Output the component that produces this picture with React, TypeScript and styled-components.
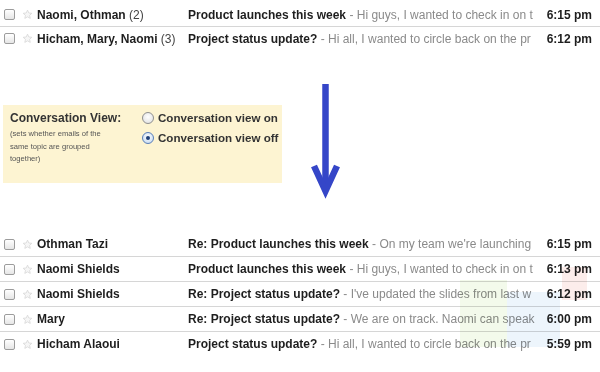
import React from "react";
import styled, { createGlobalStyle } from "styled-components";

const Global = createGlobalStyle`
  html, body { margin: 0; padding: 0; background: #ffffff; }
  body { font-family: "Liberation Sans", Arial, sans-serif; color: #222; }
`;

const Page = styled.div`
  position: relative;
  width: 600px;
  height: 372px;
  overflow: hidden;
  background: #fff;
`;

const List = styled.div<{ $top: number }>`
  display: flex;
  flex-direction: column;
  padding-top: ${(p) => p.$top}px;
`;

const Row = styled.div<{ $h: number; $line: boolean }>`
  display: grid;
  grid-template-columns: 18px 15px 151px minmax(0, 1fr) auto;
  align-items: center;
  height: ${(p) => p.$h}px;
  padding-left: 4px;
  padding-right: 8px;
  border-bottom: 1px solid ${(p) => (p.$line ? "#d6d6d6" : "transparent")};
  font-size: 12px;
  font-weight: bold;
  color: #1e1e1e;
  box-sizing: border-box;
`;

const Check = styled.span`
  display: block;
  width: 9px;
  height: 9px;
  border: 1px solid #9c9c9c;
  border-radius: 2px;
  background: linear-gradient(#ffffff, #e6e6e6);
`;

const StarIcon = () => (
  <svg width="11" height="11" viewBox="0 0 24 24">
    <path
      d="M12 2.5l2.9 6.2 6.6.7-5 4.5 1.5 6.6L12 17.1l-5.9 3.4 1.5-6.6-5-4.5 6.6-.7z"
      fill="#f6f6f6"
      stroke="#d8d8d8"
      strokeWidth="1.8"
      strokeLinejoin="round"
    />
  </svg>
);

const Sender = styled.span`
  white-space: nowrap;
`;

const Count = styled.span`
  font-weight: normal;
  color: #444;
`;

const SubjectCell = styled.span`
  white-space: nowrap;
`;

const Snippet = styled.span`
  font-weight: normal;
  color: #8a8a8a;
`;

const Time = styled.span`
  text-align: right;
  white-space: nowrap;
`;

const Middle = styled.div`
  display: flex;
  align-items: flex-start;
  height: 181px;
`;

const Settings = styled.div`
  display: grid;
  grid-template-columns: 132px 1fr;
  width: 279px;
  height: 78px;
  margin-left: 3px;
  margin-top: 54px;
  background: #fdf4d2;
  padding: 6px 0 0 7px;
  box-sizing: border-box;
`;

const SettingTitle = styled.div`
  font-size: 12px;
  font-weight: bold;
  color: #333;
  line-height: 14px;
`;

const SettingNote = styled.div`
  font-size: 7.6px;
  color: #555;
  line-height: 12.6px;
  margin-top: 3px;
  width: 100px;
`;

const Options = styled.div`
  display: flex;
  flex-direction: column;
  gap: 6px;
`;

const Option = styled.label`
  display: flex;
  align-items: center;
  gap: 4px;
  font-size: 11.6px;
  font-weight: bold;
  color: #333;
  line-height: 14px;
`;

const Radio = styled.span<{ $on: boolean }>`
  display: inline-flex;
  align-items: center;
  justify-content: center;
  width: 10px;
  height: 10px;
  border-radius: 50%;
  border: 1px solid ${(p) => (p.$on ? "#5a7fb8" : "#8f8f8f")};
  background: ${(p) =>
    p.$on
      ? "radial-gradient(circle at 50% 40%, #ffffff, #bcd3ef)"
      : "radial-gradient(circle at 50% 40%, #ffffff, #dddddd)"};
  &::after {
    content: "";
    display: ${(p) => (p.$on ? "block" : "none")};
    width: 4px;
    height: 4px;
    border-radius: 50%;
    background: #1f3f78;
  }
`;

const ArrowBox = styled.div`
  margin-left: 29px;
  margin-top: 33px;
`;

const Arrow = () => (
  <svg width="30" height="116" viewBox="0 0 30 116">
    <line x1="14.5" y1="0" x2="14.5" y2="106" stroke="#3546c8" strokeWidth="6.5" />
    <polyline
      points="3,82 14.5,107 26,82"
      fill="none"
      stroke="#3546c8"
      strokeWidth="6.5"
      strokeLinejoin="miter"
      strokeMiterlimit="6"
    />
  </svg>
);

const Watermark = styled.div<{ $x: number; $y: number; $w: number; $h: number; $c: string }>`
  position: absolute;
  left: ${(p) => p.$x}px;
  top: ${(p) => p.$y}px;
  width: ${(p) => p.$w}px;
  height: ${(p) => p.$h}px;
  background: ${(p) => p.$c};
  mix-blend-mode: multiply;
  pointer-events: none;
`;

type Msg = { sender: string; count?: number; subject: string; snippet: string; time: string };

const top: Msg[] = [
  { sender: "Naomi, Othman", count: 2, subject: "Product launches this week", snippet: "Hi guys, I wanted to check in on t", time: "6:15 pm" },
  { sender: "Hicham, Mary, Naomi", count: 3, subject: "Project status update?", snippet: "Hi all, I wanted to circle back on the pr", time: "6:12 pm" },
];

const bottom: Msg[] = [
  { sender: "Othman Tazi", subject: "Re: Product launches this week", snippet: "On my team we're launching", time: "6:15 pm" },
  { sender: "Naomi Shields", subject: "Product launches this week", snippet: "Hi guys, I wanted to check in on t", time: "6:13 pm" },
  { sender: "Naomi Shields", subject: "Re: Project status update?", snippet: "I've updated the slides from last w", time: "6:12 pm" },
  { sender: "Mary", subject: "Re: Project status update?", snippet: "We are on track. Naomi can speak", time: "6:00 pm" },
  { sender: "Hicham Alaoui", subject: "Project status update?", snippet: "Hi all, I wanted to circle back on the pr", time: "5:59 pm" },
];

const MessageRow = ({ m, h, line }: { m: Msg; h: number; line: boolean }) => (
  <Row $h={h} $line={line}>
    <Check />
    <StarIcon />
    <Sender>
      {m.sender}
      {m.count ? <Count> ({m.count})</Count> : null}
    </Sender>
    <SubjectCell>
      {m.subject}
      <Snippet> - {m.snippet}</Snippet>
    </SubjectCell>
    <Time>{m.time}</Time>
  </Row>
);

export default function App() {
  return (
    <Page>
      <Global />
      <List $top={3}>
        {top.map((m, i) => (
          <MessageRow key={i} m={m} h={24} line={i < top.length - 1} />
        ))}
      </List>
      <Middle>
        <Settings>
          <div>
            <SettingTitle>Conversation View:</SettingTitle>
            <SettingNote>(sets whether emails of the same topic are grouped together)</SettingNote>
          </div>
          <Options>
            <Option>
              <Radio $on={false} />
              Conversation view on
            </Option>
            <Option>
              <Radio $on={true} />
              Conversation view off
            </Option>
          </Options>
        </Settings>
        <ArrowBox>
          <Arrow />
        </ArrowBox>
      </Middle>
      <List $top={0}>
        {bottom.map((m, i) => (
          <MessageRow key={i} m={m} h={25} line={i < bottom.length - 1} />
        ))}
      </List>
      <Watermark $x={460} $y={280} $w={47} $h={67} $c="rgba(200, 230, 165, 0.22)" />
      <Watermark $x={507} $y={292} $w={53} $h={55} $c="rgba(175, 210, 240, 0.22)" />
      <Watermark $x={562} $y={267} $w={25} $h={33} $c="rgba(240, 175, 165, 0.22)" />
    </Page>
  );
}
